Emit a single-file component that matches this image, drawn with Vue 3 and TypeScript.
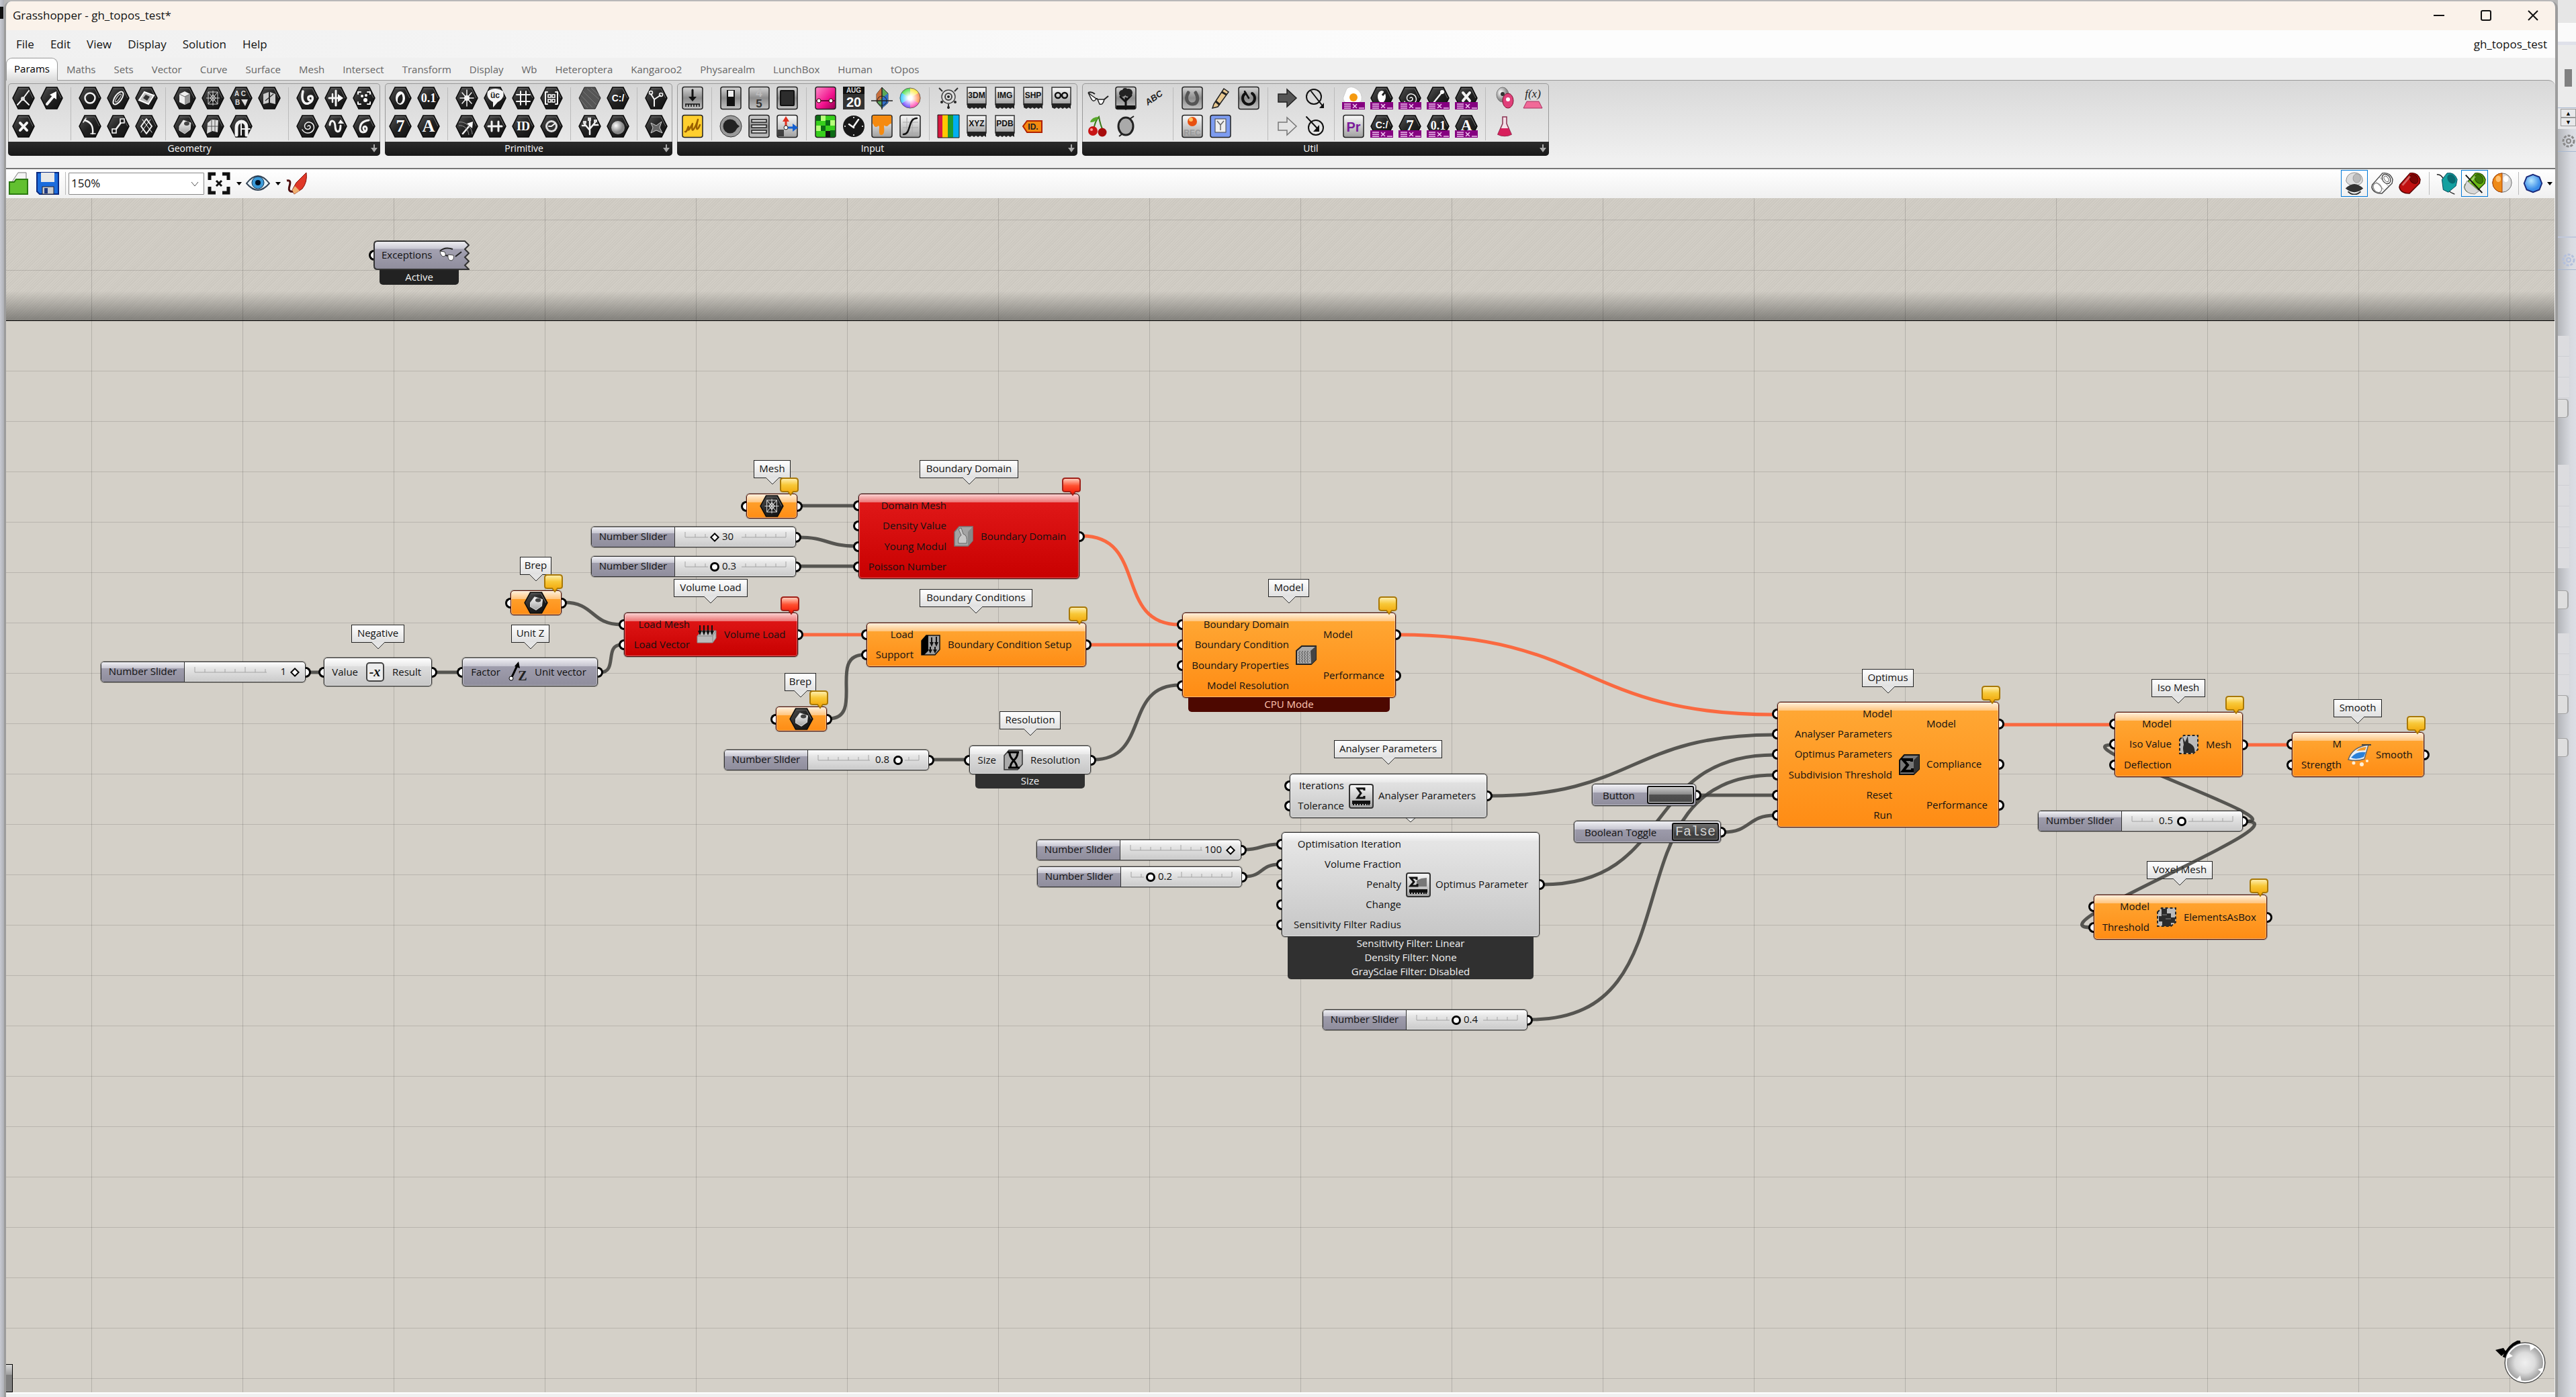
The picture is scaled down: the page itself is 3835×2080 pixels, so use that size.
<script setup lang="ts">
import { ref, reactive } from 'vue'

interface Tag { text: string; cx: number; y: number; w: number }
interface Node {
  kind: 'orange' | 'red' | 'grey' | 'slate'
  x: number; y: number; w: number; h: number
  ins: string[]; outs: string[]
  inW: number
  icon: string
  bubble?: 'warn' | 'error'
  footer?: string[]
}
interface Param { x: number; y: number; icon: string }
interface Slider { id: string; x: number; y: number; min: number; max: number; step: number; value: number; whole?: boolean }

/* Canvas pan: document coordinate shown at the canvas origin. */
const pan = { x: 9, y: 295 }
const at = (x: number, y: number) => ({ left: `${x - pan.x}px`, top: `${y - pan.y}px` })
const box = (n: { x: number; y: number; w: number; h: number }) => ({ ...at(n.x, n.y), width: `${n.w}px`, height: `${n.h}px` })

const menu = ['File', 'Edit', 'View', 'Display', 'Solution', 'Help']
const tabs = ['Params', 'Maths', 'Sets', 'Vector', 'Curve', 'Surface', 'Mesh', 'Intersect', 'Transform', 'Display', 'Wb', 'Heteroptera', 'Kangaroo2', 'Physarealm', 'LunchBox', 'Human', 'tOpos']
const zoom = ref('150%')

const w = 'stroke="#f4f4f4" stroke-width="2.5" fill="none" stroke-linecap="round" stroke-linejoin="round"'
const k = 'stroke="#111" stroke-width="2.5" fill="none" stroke-linecap="round" stroke-linejoin="round"'
/* Same strokes in other widths. */
const wl = (n: number) => `stroke="#f4f4f4" stroke-width="${n}" fill="none" stroke-linecap="round" stroke-linejoin="round"`
const kl = (n: number, c = '#111') => `stroke="${c}" stroke-width="${n}" fill="none" stroke-linecap="round" stroke-linejoin="round"`
const hex = (g: string) => `<path d="M10 2H26L34 18L26 34H10L2 18Z" fill="url(#gHex)" stroke="#0a0a0a" stroke-width="1.5"/><path d="M11 4H25L32 18" stroke="#6a6a6a" fill="none"/>${g}`
const tile = (g: string, f = 'url(#gTile)') => `<rect x="3" y="1.5" width="30" height="33" rx="3" fill="${f}" stroke="#222" stroke-width="1.5"/>${g}`
const glyph = (t: string, size = 24, fam = 'Liberation Serif', fill = '#fff', y = 26) =>
  `<text x="18" y="${y}" text-anchor="middle" font-family="${fam}" font-weight="700" font-size="${size}" fill="${fill}">${t}</text>`
const chip = (t: string) => `<path d="M4 2H32V28H4Z" fill="url(#gTile)" stroke="#333" stroke-width="1.5"/><path d="M4 26H32V34L29 32L26 34L23 32L20 34L17 32L14 34L11 32L8 34L4 32Z" fill="#222"/>${t && glyph(t, 12, 'Liberation Sans', '#111', 18)}`
const purple = (g: string) => `${g}<rect x="1" y="24" width="34" height="11" fill="#850080"/><path d="M4 27H14M4 30H14M4 33H14" stroke="#f0c8f0" stroke-width="1.5"/><path d="M17 27L23 33M23 27L17 33M26 33H34" stroke="#f0c8f0" stroke-width="1.5"/>`
const spiral = `<path d="M18 18c1-2 4-1 4 1c0 4-6 5-8 1c-2-5 3-9 7-8c6 1 8 8 5 12c-4 6-13 5-16-1" ${wl(1.5)}/>`

const g: Record<string, string> = {
  point: hex(`<path d="M17 19L26 7M17 19L9 28M17 19L26 28" ${wl(2)}/><circle cx="17" cy="19" r="3" fill="#ddd"/>`),
  vector: hex(`<path d="M11 27L21 15" ${wl(4)}/><path d="M25 8V20L15 13Z" fill="#fff"/>`),
  xhex: hex(`<path d="M13 13L23 24M23 13L13 24" ${wl(4)}/>`),
  circle: hex(`<circle cx="18" cy="18" r="7.5" ${w}/>`),
  arc: hex(`<path d="M10 9C20 12 23 18 22 29" ${w}/><path d="M19 29H26M8 12L12 6" ${wl(1.5)}/>`),
  ellipse: hex(`<ellipse cx="18" cy="18" rx="5" ry="11" transform="rotate(35 18 18)" ${wl(2)}/><ellipse cx="18" cy="18" rx="2" ry="7" transform="rotate(35 18 18)" ${wl(1)}/>`),
  line: hex(`<path d="M12 26L24 10" ${w}/><rect x="9" y="22" width="6" height="6" fill="#222" stroke="#fff" stroke-width="1.5"/><rect x="21" y="7" width="6" height="6" fill="#222" stroke="#fff" stroke-width="1.5"/>`),
  rect: hex(`<path d="M7 21L15 9L29 14L21 27Z" fill="#bbb" stroke="#fff" stroke-width="2"/><path d="M13 18L17 13L23 16L19 22Z" fill="#333"/>`),
  diamond: hex(`<path d="M18 7L26 18L18 29L10 18Z" ${wl(2)}/><path d="M12 8L26 27M24 8L10 27" ${wl(1)}/>`),
  cube: hex(`<path d="M10 12L18 8L26 12V24L18 28L10 24Z" fill="#eee"/><path d="M18 16V28L26 24V12Z" fill="#999"/><path d="M10 12L18 16L26 12" stroke="#666" fill="none"/>`),
  brep: hex(`<path d="M10 18L16 9L27 13L26 23L18 29L10 24Z" fill="url(#gTile)" stroke="#ddd"/><ellipse cx="21" cy="14" rx="4" ry="3" fill="#444"/>`),
  mesh: hex(`<path d="M11 9H25V27H11Z M11 9L25 27M25 9L11 27M18 7V29M8 18H28" stroke="#d0d0d0" fill="none"/><path d="M18 13L22 18L18 23L14 18Z" fill="none" stroke="#eee"/>`),
  surf: hex(`<path d="M10 13L16 8L26 9L25 27L17 25L9 29Z" fill="#ddd"/><path d="M16 8V25M21 9V26M10 18H26" stroke="#555"/>`),
  abc: hex(`<text x="8" y="15" font-family="Liberation Sans" font-size="10" font-weight="700" fill="#ddd">A C</text><text x="9" y="28" font-family="Liberation Sans" font-size="10" font-weight="700" fill="#ddd">B</text><path d="M18 20H28L24 30Z" fill="#ddd"/>`),
  arch: hex(`<path d="M11 31V20C11 8 26 8 26 20V31" ${wl(5)}/><path d="M18 14V31M18 22H31" ${wl(2)}/>`),
  book: hex(`<path d="M9 12L17 9V25L9 27ZM27 12L19 9V25L27 27Z" fill="#ccc"/><path d="M12 22L24 12" stroke="#333" stroke-width="1.5"/>`),
  hook: hex(`<path d="M11 8C8 20 12 28 19 26C28 22 26 14 22 15C17 16 19 21 21 21" ${wl(3.5)}/>`),
  spiral: hex(spiral),
  flow: hex(`<path d="M18 7V29M8 18H22" ${wl(3)}/><path d="M21 12L29 18L21 24Z" fill="#fff"/><path d="M13 12V24" ${w}/>`),
  wave: hex(`<path d="M9 16C10 8 16 8 17 17C17 29 25 29 25 17" ${wl(3)}/><path d="M21 14H30L25 8Z" fill="#fff"/>`),
  dots: hex(`<path d="M9 12V9H13M23 9H27V12M27 24V27H23M13 27H9V24" ${wl(2)}/><circle cx="15" cy="15" r="2" fill="#fff"/><circle cx="21" cy="14" r="2" fill="#fff"/><circle cx="20" cy="21" r="3" fill="#fff"/>`),
  twist: hex(`<path d="M25 9C15 10 12 16 12 22C13 29 21 28 22 22C22 16 14 18 18 24" ${wl(3)}/>`),
  bool: hex(`<ellipse cx="18" cy="18" rx="7" ry="10" fill="#fff"/><path d="M20 12A4 7 0 0 1 14 24Q13 15 20 12Z" fill="#222"/>`),
  seven: hex(glyph('7', 26)),
  num: hex(glyph('0.1', 18, 'Liberation Serif', '#fff', 24)),
  letter: hex(glyph('A', 26)),
  burst: hex(`<circle cx="18" cy="18" r="4" fill="#fff"/><path d="M18 6V30M8 18H28M11 10L25 26M25 10L11 26" ${wl(1.5)}/>`),
  ray: hex(`<path d="M12 29L23 16" ${w}/><path d="M27 11L26 21L18 14Z" fill="#fff"/><path d="M6 12C16 10 26 20 26 30M6 17C14 16 20 22 21 31" stroke="#999" fill="none"/>`),
  talk: hex(`<path d="M7 8Q18 0 30 8Q33 18 22 24L15 32L15 24Q4 18 7 8Z" fill="#f4f4f4"/>${glyph('üc', 12, 'Liberation Sans', '#222', 18)}`),
  link: hex(`<path d="M13 11V25M23 11V25M8 18H28" ${wl(3)}/>`),
  grid: hex(`<path d="M14 8V28M22 8V28M8 13H28M8 23H28" ${wl(2)}/>`),
  id: hex(glyph('ID', 18, 'Liberation Serif', '#fff', 24)),
  matrix: hex(`<path d="M12 9H9V27H12M24 9H27V27H24" ${wl(2)}/><path d="M13 13H17V17H13ZM19 13H23V17H19ZM13 20H17V24H13ZM19 20H23V24H19Z" stroke="#fff" stroke-width="1.5" fill="none"/>`),
  clockh: hex(`<circle cx="18" cy="18" r="9" fill="#ddd"/><circle cx="18" cy="18" r="6" fill="#333"/><path d="M18 18L23 14M18 18H14" ${wl(2)}/>`),
  shade: `<path d="M10 2H26L34 18L26 34H10L2 18Z" fill="#555" stroke="#222"/><path d="M8 8L28 28M5 14L22 32M14 4L32 20M20 3L33 15M4 20L15 33" stroke="#777"/>`,
  tree: hex(`<path d="M18 30V17M18 24L9 13M18 22L27 11M18 18V7M12 17H7M24 16H30" ${w}/><path d="M8 10H13V14H8ZM15 5H20V10H15ZM24 8H29V12H24Z" fill="#ddd"/>`),
  path: hex(glyph('C:/', 14, 'Liberation Sans', '#fff', 23)),
  ball: hex(`<circle cx="18" cy="20" r="10" fill="url(#gBall)"/>`),
  branch: hex(`<path d="M15 30V20L10 12M15 20L24 14" ${wl(2)}/><circle cx="10" cy="10" r="2.5" ${wl(1.5)}/><circle cx="25" cy="13" r="2.5" ${wl(1.5)}/>`),
  star: hex(`<path d="M10 13L18 17L26 11L23 20L27 28L18 24L10 28L13 20Z" fill="#666" stroke="#ccc"/>`),
  press: tile(`<path d="M18 6V18" ${kl(3)}/><path d="M12 16H24L18 23Z" fill="#111"/><path d="M7 27H29M8 27V31M12 27V31M16 27V31M20 27V31M24 27V31M28 27V31" stroke="#111" stroke-width="1.5"/>`, 'url(#gDim)'),
  scribble: tile(`<path d="M7 26C10 28 12 14 12 20C10 30 17 16 18 14C15 34 23 18 26 8C22 24 25 26 29 16" ${kl(2.5, '#9a6000')}/>`, '#ffcf2e'),
  toggle: tile(`<rect x="12" y="6" width="12" height="24" fill="#111"/><rect x="14" y="7" width="8" height="9" fill="#eee"/>`, 'url(#gDim)'),
  knob: `<circle cx="18" cy="18" r="16" fill="#999" stroke="#333"/><circle cx="17" cy="18" r="10.5" fill="#222"/><path d="M25 13L31 18L25 23Z" fill="#222"/>`,
  digits: tile(`${glyph('4', 17, 'Liberation Sans', '#bbb', 16)}${glyph('5', 17, 'Liberation Sans', '#333', 32)}`, 'url(#gDim)'),
  list: tile(`<path d="M7 8H29V12H7ZM7 16H29V20H7ZM7 24H29V28H7Z" fill="#ddd" stroke="#222" stroke-width="1.5"/>`, 'url(#gDim)'),
  panel: tile(`<rect x="8" y="7" width="20" height="22" rx="1" fill="#2c2c2c" stroke="#111" stroke-width="2"/>`, 'url(#gDim)'),
  axes: tile(`<path d="M16 20V8" stroke="#e03020" stroke-width="3"/><path d="M11 11L16 3L21 11Z" fill="#e03020"/><path d="M16 20H27" stroke="#1560d0" stroke-width="3"/><path d="M26 14L34 20L26 26Z" fill="#1560d0"/><circle cx="16" cy="20" r="3" fill="#fff" stroke="#222"/><path d="M4 23H13V33H4Z" fill="#111" opacity=".7"/>`),
  gradient: tile(`<path d="M4 22H32" stroke="#400020" stroke-width="1.5"/><circle cx="8" cy="22" r="3" fill="#fff" stroke="#300"/><circle cx="26" cy="22" r="3" fill="#fff" stroke="#300"/>`, 'url(#gPink)'),
  greens: tile(`<path d="M4 2H11V10H4ZM18 9H25V17H18ZM11 17H18V25H11ZM25 24H32V34H25Z" fill="#0b6b14"/><path d="M11 2H18V10H11ZM4 17H11V25H4ZM25 9H32V17H25Z" fill="#b6ff7a"/><path d="M18 25H25V34H18Z" fill="#111"/>`, '#37cf1c'),
  date: `<rect x="2" y="1" width="32" height="34" fill="#333"/><rect x="2" y="1" width="32" height="11" fill="#111"/>${glyph('AUG', 10, 'Liberation Sans', '#ddd', 10)}${glyph('20', 20, 'Liberation Sans', '#fff', 31)}`,
  clock: `<circle cx="18" cy="18" r="16" fill="#181818"/><path d="M18 4V6M18 30V32M4 18H6M30 18H32" stroke="#ccc" stroke-width="2"/><path d="M18 18L25 8M18 20L11 15" ${w}/>`,
  rgb: `<path d="M18 2L27 11V25L18 33L10 24V12Z" fill="#5aa85a" stroke="#333"/><path d="M18 2L10 12V24L18 18Z" fill="#c86e3c"/><path d="M18 18L27 11V25L18 33Z" fill="#2f6fc8"/><path d="M2 22H34M18 2V35" stroke="#222" stroke-width="1.5"/><circle cx="18" cy="22" r="7" fill="none" stroke="#222"/>`,
  drip: tile(`<path d="M4 2H32V14C28 14 28 18 25 18C22 18 22 15 21 18C22 26 21 31 17 31C13 31 14 24 14 19C13 15 12 19 9 19C6 19 6 15 4 14Z" fill="#f58a10"/>`),
  wheel: `<path d="M18 18L18 3A15 15 0 0 1 31 10Z" fill="#ffe83c"/><path d="M18 18L31 10A15 15 0 0 1 31 26Z" fill="#ff8a50"/><path d="M18 18L31 26A15 15 0 0 1 18 33Z" fill="#ff48b0"/><path d="M18 18L18 33A15 15 0 0 1 5 26Z" fill="#7048ff"/><path d="M18 18L5 26A15 15 0 0 1 5 10Z" fill="#2fc8ff"/><path d="M18 18L5 10A15 15 0 0 1 18 3Z" fill="#48e048"/><circle cx="18" cy="18" r="15" fill="url(#gGlow)" stroke="#666"/>`,
  curve: tile(`<path d="M7 12H30M7 20H30M7 28H30M13 5V31M21 5V31" stroke="#aaa"/><path d="M8 30C20 30 14 6 28 6" ${k}/>`),
  target: `<circle cx="18" cy="16" r="10" fill="#ddd" stroke="#444" stroke-width="1.5"/><circle cx="18" cy="16" r="5" fill="none" stroke="#444" stroke-width="2"/><circle cx="18" cy="16" r="2" fill="#222"/><path d="M4 3L9 8M32 3L27 8M18 27V34" stroke="#333" stroke-width="2"/><circle cx="8" cy="24" r="2" fill="#222"/><circle cx="28" cy="24" r="2" fill="#222"/><circle cx="18" cy="32" r="2" fill="#222"/>`,
  bars: `<path d="M2 1H9V35H2Z" fill="#d81840"/><path d="M9 1H17V35H9Z" fill="#ffc800"/><path d="M17 1H25V35H17Z" fill="#1e9b30"/><path d="M25 1H34V35H25Z" fill="#00aef0"/><path d="M2 1H34V35H2Z" fill="none" stroke="#111"/>`,
  m3d: chip('3DM'), img: chip('IMG'), shp: chip('SHP'), xyz: chip('XYZ'), pdb: chip('PDB'),
  eyes: chip('') + `<circle cx="13" cy="14" r="4" ${k}/><circle cx="23" cy="14" r="4" ${k}/>`,
  idtag: `<path d="M3 18L9 10H31V27H9Z" fill="#f58a10" stroke="#b02000" stroke-width="2"/>${glyph('ID.', 12, 'Liberation Sans', '#222', 23)}`,
  specs: `<path d="M4 10L8 18Q12 26 16 19L9 14Z" fill="#fff" stroke="#222" stroke-width="1.5"/><path d="M18 20L28 20Q26 29 21 27Z" fill="#fff" stroke="#222" stroke-width="1.5"/><path d="M4 10Q9 8 14 12M28 20L34 15M16 19H18" stroke="#222" stroke-width="2" fill="none"/>`,
  cherry: `<path d="M12 24Q14 10 20 4Q22 16 26 24" stroke="#3b7a1a" stroke-width="2" fill="none"/><path d="M20 4Q9 4 7 12Q15 13 20 4Z" fill="#58a82a"/><circle cx="11" cy="25" r="7" fill="#c81414"/><circle cx="25" cy="27" r="6.5" fill="#a80c0c"/><circle cx="9" cy="23" r="2" fill="#ff9a9a"/>`,
  oak: tile(`<path d="M18 34V18M18 24L10 16M18 22L26 14" ${kl(3)}/><circle cx="13" cy="11" r="5" fill="#222"/><circle cx="22" cy="10" r="6" fill="#222"/><circle cx="17" cy="7" r="4" fill="#222"/><path d="M4 29H32V34H4Z" fill="#111"/>`, 'url(#gDim)'),
  lens: `<ellipse cx="18" cy="18" rx="11" ry="13" fill="#aaa" stroke="#222" stroke-width="3"/><path d="M24 7L30 3M12 30L8 33" stroke="#222" stroke-width="2"/>`,
  text: `<text x="18" y="22" text-anchor="middle" transform="rotate(-35 18 18)" font-family="Liberation Sans" font-style="italic" font-size="13" font-weight="700" fill="#222">ABC</text>`,
  loop: tile(`<path d="M12 10C6 20 12 27 18 27C26 27 28 18 23 10" ${kl(5, '#555')}/>`, 'url(#gDim)'),
  rec: `${tile('')}<circle cx="18" cy="11" r="7" fill="#e85010"/><circle cx="16" cy="8" r="3" fill="#ffc060"/>${glyph('REC', 12, 'Liberation Sans', '#999', 32)}`,
  pencil: `<path d="M8 27L23 4L30 9L14 31L6 33Z" fill="#e8c890" stroke="#222" stroke-width="1.5"/><path d="M20 9L27 13M11 23L17 28" stroke="#222" stroke-width="3"/>`,
  blue: tile(`<rect x="10" y="7" width="16" height="20" fill="#eee" stroke="#444"/><path d="M13 10L18 16L23 10M18 16V24" stroke="#666" fill="none" stroke-width="1.5"/>`, '#7d9cf0'),
  power: tile(`<path d="M13 11A9 9 0 1 0 23 11" ${kl(4)}/><path d="M18 18L12 8" ${k}/>`, 'url(#gDim)'),
  arrow: `<path d="M5 12H18V5L32 18L18 31V24H5Z" fill="#555" stroke="#222" stroke-width="1.5"/>`,
  arrowl: `<path d="M5 12H18V5L32 18L18 31V24H5Z" fill="#e4e4e4" stroke="#777" stroke-width="1.5"/>`,
  qout: `<circle cx="16" cy="16" r="11" ${kl(2)}/><path d="M12 8L30 31" ${kl(2)}/><path d="M31 25V33H24Z" fill="#111"/>`,
  qin: `<circle cx="19" cy="20" r="11" ${kl(2)}/><path d="M5 4L21 21" ${kl(2)}/><path d="M24 16V26H15Z" fill="#111"/>`,
  egg: purple(`<path d="M8 4Q14 -1 22 4Q32 10 30 22Q24 28 8 26Q0 22 4 14Z" fill="#fff" stroke="#ccc"/><circle cx="18" cy="17" r="6" fill="#f59a10"/>`),
  pr: tile(`${glyph('Pr', 20, 'Liberation Sans', '#7a1a9a', 26)}`),
  pbool: purple(hex(`<ellipse cx="18" cy="16" rx="6" ry="9" fill="#fff"/><path d="M19 14L24 8" stroke="#222" stroke-width="3"/>`)),
  pspiral: purple(hex(spiral)),
  pline: purple(hex(`<path d="M12 24L24 9" ${w}/><circle cx="24" cy="9" r="3" fill="#fff"/>`)),
  px: purple(hex(`<path d="M13 10L23 22M23 10L13 22" ${wl(4)}/>`)),
  ppath: purple(hex(glyph('C:/', 14, 'Liberation Sans', '#fff', 21))),
  pseven: purple(hex(glyph('7', 23, 'Liberation Serif', '#fff', 24))),
  pnum: purple(hex(glyph('0.1', 18, 'Liberation Serif', '#fff', 23))),
  pletter: purple(hex(glyph('A', 23, 'Liberation Serif', '#fff', 24))),
  pills: `<ellipse cx="15" cy="13" rx="9" ry="11" fill="url(#gBall)" stroke="#777"/><ellipse cx="23" cy="22" rx="8" ry="11" fill="#e0407a" stroke="#801030"/><circle cx="23" cy="20" r="3" fill="#fff"/><circle cx="15" cy="12" r="3" fill="#333"/>`,
  flask: `<path d="M15 4H21V14L28 30Q18 35 8 30L15 14Z" fill="#f4e0e8" stroke="#8a3050" stroke-width="1.5"/><path d="M12 21H24L28 30Q18 35 8 30Z" fill="#d8205c"/>`,
  fx: `<text x="18" y="17" text-anchor="middle" font-family="Liberation Serif" font-style="italic" font-size="17" fill="#222">f(x)</text><path d="M9 23H27L32 33H4Z" fill="#f06a98" stroke="#a83060"/>`,
}

interface Group { top: string[]; bottom: string[] }
const ribbon: { name: string; groups: Group[] }[] = [
  { name: 'Geometry', groups: [
    { top: ['point', 'vector'], bottom: ['xhex', ''] },
    { top: ['circle', 'ellipse', 'rect'], bottom: ['arc', 'line', 'diamond'] },
    { top: ['cube', 'mesh', 'abc', 'book'], bottom: ['brep', 'surf', 'arch', ''] },
    { top: ['hook', 'flow', 'dots'], bottom: ['spiral', 'wave', 'twist'] } ] },
  { name: 'Primitive', groups: [
    { top: ['bool', 'num'], bottom: ['seven', 'letter'] },
    { top: ['burst', 'talk', 'grid', 'matrix'], bottom: ['ray', 'link', 'id', 'clockh'] },
    { top: ['shade', 'path'], bottom: ['tree', 'ball'] },
    { top: ['branch'], bottom: ['star'] } ] },
  { name: 'Input', groups: [
    { top: ['press'], bottom: ['scribble'] },
    { top: ['toggle', 'digits', 'panel'], bottom: ['knob', 'list', 'axes'] },
    { top: ['gradient', 'date', 'rgb', 'wheel'], bottom: ['greens', 'clock', 'drip', 'curve'] },
    { top: ['target', 'm3d', 'img', 'shp', 'eyes'], bottom: ['bars', 'xyz', 'pdb', 'idtag', ''] } ] },
  { name: 'Util', groups: [
    { top: ['specs', 'oak', 'text'], bottom: ['cherry', 'lens', ''] },
    { top: ['loop', 'pencil', 'power'], bottom: ['rec', 'blue', ''] },
    { top: ['arrow', 'qout'], bottom: ['arrowl', 'qin'] },
    { top: ['egg', 'pbool', 'pspiral', 'pline', 'px'], bottom: ['pr', 'ppath', 'pseven', 'pnum', 'pletter'] },
    { top: ['pills', 'fx'], bottom: ['flask', ''] } ] },
]

const tube = (a: string, b: string, s: string) => `<path d="M3 20L19 2Q31 0 35 12L34 18L18 34Q4 34 2 24Z" fill="${a}" stroke="${s}" stroke-width="1.5"/><ellipse cx="25" cy="11" rx="6" ry="8" transform="rotate(-35 25 11)" fill="${b}" stroke="${s}"/><path d="M7 21L19 7" stroke="#fff" stroke-opacity=".35" stroke-width="3"/>`
const preview: { icon: string; on?: boolean; sep?: string; label: string }[] = [
  { label: 'No preview', on: true, icon: `<path d="M5 14Q6 2 18 1Q31 2 31 14Q30 20 18 22Q6 20 5 14Z" fill="#ddd" stroke="#888"/><ellipse cx="22" cy="10" rx="6" ry="7" fill="#bbb" stroke="#999"/><path d="M4 26Q18 12 32 26Q18 38 4 26Z" fill="#333"/><path d="M8 31Q18 40 28 31" stroke="#333" stroke-width="2" fill="none"/>` },
  { label: 'Wireframe preview', icon: `<path d="M3 20L19 2Q31 0 35 12L34 18L18 34Q4 34 2 24Z" fill="#fff" stroke="#444" stroke-width="1.5"/><ellipse cx="25" cy="11" rx="6" ry="8" transform="rotate(-35 25 11)" fill="none" stroke="#444" stroke-width="1.5"/><ellipse cx="25" cy="11" rx="3" ry="5" transform="rotate(-35 25 11)" fill="none" stroke="#666"/><ellipse cx="11" cy="25" rx="6" ry="8" transform="rotate(-35 11 25)" fill="none" stroke="#888" stroke-width="1.5"/><path d="M8 15L21 28M14 8L28 22" stroke="#888"/>` },
  { label: 'Shaded preview', icon: tube('#c01010', '#7a0606', '#500'), sep: 'wide' },
  { label: 'Selected only', icon: `<path d="M2 4Q12 4 14 18Q16 30 30 35" stroke="#222" stroke-width="1.5" fill="none"/><path d="M10 12L18 2Q30 0 34 12L32 22L20 32L12 28Z" fill="#14a0a0" stroke="#045"/><ellipse cx="25" cy="11" rx="6" ry="8" transform="rotate(-35 25 11)" fill="#0a6a70"/>` },
  { label: 'Clipped preview', on: true, icon: `${tube('#6ab814', '#3c7a08', '#264d04')}<path d="M6 14L25 30L18 35Q4 34 2 24Z" fill="#d8d8d8" stroke="#888"/><path d="M4 5L30 33" stroke="#111" stroke-width="2"/>` },
  { label: 'Document colours', icon: `<circle cx="18" cy="17" r="15" fill="#ddd" stroke="#666"/><path d="M18 2A15 15 0 0 0 18 32Z" fill="#ee8a18" stroke="#a03a00"/><ellipse cx="12" cy="11" rx="4" ry="5" fill="#ffc070"/><ellipse cx="24" cy="11" rx="4" ry="5" fill="#fff"/>`, sep: 'tight' },
  { label: 'Mesh quality', icon: `<path d="M18 4L28 8L32 18L28 28L18 32L8 28L4 18L8 8Z" fill="url(#gBlue)" stroke="#1a2a7a" stroke-width="2"/>` },
]

const slab = '<path d="M2 9L9 1H29V22L22 30H2Z" fill="#aaa" stroke="#333" stroke-width="1.5"/>'
const comb = '<path d="M3 23H28V26H3ZM4 26V29M8 26V29M12 26V29M16 26V29M20 26V29M24 26V29M27 26V29" fill="#111" stroke="#111" stroke-width="2"/>'
const nodeIcons: Record<string, string> = {
  domain: `<path d="M2 9L9 1H29V22L22 30H2Z" fill="#a4a4a4" stroke="#777" stroke-width="1.5"/><path d="M22 9V30L29 22V1Z" fill="#888"/><path d="M12 3L15 12Q22 14 20 26H8Q6 18 12 14L8 5Z" fill="#c8c8c8" stroke="#666"/>`,
  load: `<path d="M1 17L8 9H29V20L24 27H1Z" fill="#bbb" stroke="#888"/><path d="M1 17H24L29 9M24 17V27" stroke="#888" fill="none"/><path d="M5 1V14M11 1V14M17 1V14M23 1V14" stroke="#111" stroke-width="2"/><path d="M2 9H8L5 16ZM8 9H14L11 16ZM14 9H20L17 16ZM20 9H26L23 16Z" fill="#111"/>`,
  bc: `<path d="M2 9L9 1H29V22L22 30H2Z" fill="#a0a0a0" stroke="#111" stroke-width="1.5"/><path d="M2 9L9 1H12V24L6 30H2Z" fill="#000"/><path d="M17 4V14M24 3V14M15 18V24M22 18V24" stroke="#111" stroke-width="2"/><path d="M14 11H20L17 18ZM21 11H27L24 18ZM12 22H18L15 28ZM19 22H25L22 28Z" fill="#111"/>`,
  res: `${slab}<path d="M7 4H24M8 27H25M10 5C10 16 21 16 21 27M22 5C22 16 11 16 11 27" stroke="#000" stroke-width="3" fill="none"/>`,
  neg: `<rect x="3" y="2" width="25" height="27" rx="4" fill="#ececec" stroke="#444" stroke-width="2"/><text x="15" y="22" text-anchor="middle" font-family="Liberation Serif" font-style="italic" font-weight="700" font-size="20" fill="#111">-x</text>`,
  unitz: `<path d="M6 25L15 6" stroke="#000" stroke-width="3"/><path d="M11 7L17 0L19 10Z" fill="#000"/><circle cx="6" cy="25" r="3" fill="#fff" stroke="#000"/><text x="23" y="28" text-anchor="middle" font-family="Liberation Serif" font-weight="700" font-size="20" fill="#222">Z</text>`,
  model: `<path d="M1 9L9 2H30V22L23 29H1Z" fill="#aaa" stroke="#222" stroke-width="2"/><path d="M4 12H21M4 16H21M4 20H21M4 24H21M6 9V28M10 9V28M14 9V28M18 9V28" stroke="#666" stroke-width="1.5" stroke-dasharray="2 2"/><path d="M22 9L30 2V22L23 29Z" fill="#444"/>`,
  analyser: `<rect x="-2" y="-2" width="35" height="35" rx="3" fill="url(#gTile)" stroke="#333" stroke-width="2"/><path d="M20 7V4H10L15 11L10 18H20V15" stroke="#111" stroke-width="3" fill="none"/>${comb}`,
  optparam: `<rect x="-2" y="-2" width="35" height="35" rx="3" fill="url(#gTile)" stroke="#333" stroke-width="2"/><path d="M13 16V9L20 6L28 5V18H13Z" fill="#777"/><path d="M13 8V5H4L9 11L4 17H14V14" stroke="#111" stroke-width="3" fill="none"/>${comb}`,
  optimus: `<path d="M1 9L8 1H30V22L22 30H1Z" fill="#777" stroke="#111" stroke-width="2"/><path d="M22 9L30 1V22L22 30Z" fill="#333"/><path d="M19 11V8H6L13 16L6 25H20V21" stroke="#000" stroke-width="4" fill="none"/>`,
  iso: `<path d="M2 8L8 2H29V23L22 29H2Z" fill="#bbb" stroke="#222" stroke-width="2" stroke-dasharray="4 3"/><path d="M6 3L10 12L14 3L15 13Q26 17 24 28H8Q6 20 8 16Z" fill="#2c2c2c"/>`,
  voxel: `<path d="M2 8L8 2H29V23L22 29H2Z" fill="#bbb" stroke="#222" stroke-width="2" stroke-dasharray="4 3"/><path d="M8 3H16V10H22V16H28V24H22V29H9V22H4V14H8Z" fill="#2c2c2c"/><path d="M9 12H16M14 18H22" stroke="#888"/>`,
  smooth: `<path d="M0 23Q6 4 30 1L24 22Q12 26 0 23Z" fill="#e8f0f8" stroke="#666" stroke-width="1.5"/><path d="M4 20Q12 10 26 12L23 19Q12 24 4 20Z" fill="#2a80d8"/><path d="M12 10Q18 4 27 4L25 9Z" fill="#f59a28"/><path d="M20 1H34" stroke="#444" stroke-width="2"/><circle cx="8" cy="28" r="2.5" fill="#fff0d8"/><circle cx="20" cy="30" r="3" fill="#fff0d8"/><circle cx="28" cy="25" r="2" fill="#fff0d8"/>`,
}

const tags: Tag[] = [
  { text: 'Mesh', cx: 1149, y: 685, w: 55 }, { text: 'Boundary Domain', cx: 1442, y: 685, w: 147 },
  { text: 'Volume Load', cx: 1058, y: 862, w: 110 }, { text: 'Boundary Conditions', cx: 1453, y: 877, w: 168 },
  { text: 'Brep', cx: 797, y: 829, w: 47 }, { text: 'Brep', cx: 1191, y: 1002, w: 47 },
  { text: 'Resolution', cx: 1533, y: 1059, w: 91 }, { text: 'Negative', cx: 562, y: 930, w: 79 },
  { text: 'Unit Z', cx: 789, y: 930, w: 57 }, { text: 'Model', cx: 1918, y: 862, w: 61 },
  { text: 'Analyser Parameters', cx: 2066, y: 1102, w: 161 }, { text: 'Optimus', cx: 2810, y: 996, w: 77 },
  { text: 'Iso Mesh', cx: 3243, y: 1011, w: 80 }, { text: 'Smooth', cx: 3510, y: 1041, w: 72 },
  { text: 'Voxel Mesh', cx: 3245, y: 1282, w: 98 },
]

const nodes: Node[] = [
  { kind: 'red', x: 1278, y: 735, w: 329, h: 127, ins: ['Domain Mesh', 'Density Value', 'Young Modul', 'Poisson Number'], outs: ['Boundary Domain'], inW: 130, icon: 'domain', bubble: 'error' },
  { kind: 'red', x: 929, y: 912, w: 259, h: 66, ins: ['Load Mesh', 'Load Vector'], outs: ['Volume Load'], inW: 97, icon: 'load', bubble: 'error' },
  { kind: 'orange', x: 1290, y: 927, w: 327, h: 66, ins: ['Load', 'Support'], outs: ['Boundary Condition Setup'], inW: 69, icon: 'bc', bubble: 'warn' },
  { kind: 'grey', x: 1443, y: 1110, w: 181, h: 43, ins: ['Size'], outs: ['Resolution'], inW: 39, icon: 'res', footer: ['Size'] },
  { kind: 'grey', x: 482, y: 979, w: 161, h: 43, ins: ['Value'], outs: ['Result'], inW: 50, icon: 'neg' },
  { kind: 'slate', x: 688, y: 979, w: 202, h: 43, ins: ['Factor'], outs: ['Unit vector'], inW: 56, icon: 'unitz' },
  { kind: 'orange', x: 1760, y: 912, w: 318, h: 127, ins: ['Boundary Domain', 'Boundary Condition', 'Boundary Properties', 'Model Resolution'], outs: ['Model', 'Performance'], inW: 158, icon: 'model', bubble: 'warn', footer: ['CPU Mode'] },
  { kind: 'grey', x: 1920, y: 1152, w: 294, h: 66, ins: ['Iterations', 'Tolerance'], outs: ['Analyser Parameters'], inW: 80, icon: 'analyser' },
  { kind: 'grey', x: 1908, y: 1239, w: 384, h: 156, ins: ['Optimisation Iteration', 'Volume Fraction', 'Penalty', 'Change', 'Sensitivity Filter Radius'], outs: ['Optimus Parameter'], inW: 177, icon: 'optparam', footer: ['Sensitivity Filter: Linear', 'Density Filter: None', 'GraySclae Filter: Disabled'] },
  { kind: 'orange', x: 2646, y: 1045, w: 330, h: 187, ins: ['Model', 'Analyser Parameters', 'Optimus Parameters', 'Subdivision Threshold', 'Reset', 'Run'], outs: ['Model', 'Compliance', 'Performance'], inW: 170, icon: 'optimus', bubble: 'warn' },
  { kind: 'orange', x: 3148, y: 1060, w: 191, h: 97, ins: ['Model', 'Iso Value', 'Deflection'], outs: ['Mesh'], inW: 84, icon: 'iso', bubble: 'warn' },
  { kind: 'orange', x: 3412, y: 1090, w: 197, h: 67, ins: ['M', 'Strength'], outs: ['Smooth'], inW: 73, icon: 'smooth', bubble: 'warn' },
  { kind: 'orange', x: 3117, y: 1332, w: 258, h: 67, ins: ['Model', 'Threshold'], outs: ['ElementsAsBox'], inW: 82, icon: 'voxel', bubble: 'warn' },
]

const params: Param[] = [
  { x: 1111, y: 735, icon: 'mesh' },
  { x: 760, y: 879, icon: 'brep' },
  { x: 1155, y: 1052, icon: 'brep' },
]

const sliders = reactive<Slider[]>([
  { id: 'young', x: 880, y: 784, min: 0, max: 100, step: 1, value: 30, whole: true },
  { id: 'poisson', x: 880, y: 828, min: 0, max: 1, step: 0.1, value: 0.3 },
  { id: 'factor', x: 150, y: 985, min: 0, max: 1, step: 1, value: 1, whole: true },
  { id: 'size', x: 1078, y: 1116, min: 0, max: 1, step: 0.1, value: 0.8 },
  { id: 'iteration', x: 1543, y: 1250, min: 0, max: 100, step: 1, value: 100, whole: true },
  { id: 'fraction', x: 1544, y: 1290, min: 0, max: 1, step: 0.1, value: 0.2 },
  { id: 'threshold', x: 1969, y: 1503, min: 0, max: 1, step: 0.1, value: 0.4 },
  { id: 'isovalue', x: 3034, y: 1207, min: 0, max: 1, step: 0.1, value: 0.5 },
])
const track = 150
const thumb = (s: Slider) => ((s.value - s.min) / (s.max - s.min)) * track
const leftSide = (s: Slider) => thumb(s) >= track / 2
const gap = (s: Slider): [number, number] => leftSide(s) ? [thumb(s) - 42, thumb(s) + 10] : [thumb(s) - 10, thumb(s) + 40]
const ticks = (s: Slider) => {
  const [a, b] = gap(s)
  const marks = Array.from({ length: 11 }, (_, i) => i * 15).filter(x => x < a || x > b)
    .map(x => `M${x + 1} 9V${x % 75 === 0 ? 1 : 4}`).join('')
  const head = a > 0 ? `M1 9H${a}` : ''
  const tail = b < track ? `M${b} 9H${track + 1}` : ''
  return marks + head + tail
}
const valuePos = (s: Slider) => leftSide(s) ? { right: `${track + 28 - thumb(s)}px` } : { left: `${thumb(s) + 25}px` }

const wire = (x1: number, y1: number, x2: number, y2: number, d = Math.hypot(x2 - x1, y2 - y1) / 2) =>
  `M${x1} ${y1}C${x1 + d} ${y1} ${x2 - d} ${y2} ${x2} ${y2}`
const wires = [
  wire(1190, 753, 1274, 753), wire(1189, 800, 1274, 813), wire(1189, 843, 1274, 843),
  wire(458, 1001, 478, 1001), wire(647, 1001, 684, 1001), wire(840, 897, 925, 930),
  wire(894, 1001, 925, 960), wire(1234, 1070, 1286, 975), wire(1387, 1131, 1439, 1131),
  wire(1628, 1131, 1756, 1020), wire(1852, 1265, 1904, 1257), wire(1853, 1305, 1904, 1287),
  wire(2218, 1185, 2642, 1094), wire(2296, 1317, 2642, 1124), wire(2279, 1518, 2642, 1154),
  wire(2528, 1184, 2642, 1184), wire(2566, 1239, 2642, 1214),
  wire(3343, 1223, 3144, 1109, 75), wire(3343, 1223, 3113, 1381, 92),
]
const hotWires = [
  wire(1611, 798, 1756, 930), wire(1192, 945, 1286, 945), wire(1621, 960, 1756, 960),
  wire(2082, 945, 2642, 1064), wire(2980, 1079, 3144, 1079), wire(3343, 1109, 3408, 1109),
]
const toggle = ref(false)
</script>

<template>
  <div class="desktop">
    <svg class="defs" aria-hidden="true">
      <defs>
        <linearGradient id="gHex" x1="0" y1="0" x2="1" y2="1"><stop offset="0" stop-color="#555" /><stop offset=".5" stop-color="#222" /><stop offset="1" stop-color="#111" /></linearGradient>
        <linearGradient id="gTile" x1="0" y1="0" x2="0" y2="1"><stop offset="0" stop-color="#fafafa" /><stop offset="1" stop-color="#a0a0a0" /></linearGradient>
        <linearGradient id="gDim" x1="0" y1="0" x2="0" y2="1"><stop offset="0" stop-color="#d4d4d4" /><stop offset=".5" stop-color="#8c8c8c" /><stop offset="1" stop-color="#c4c4c4" /></linearGradient>
        <linearGradient id="gPink" x1="0" y1="0" x2="1" y2="1"><stop offset="0" stop-color="#ff8ac8" /><stop offset=".6" stop-color="#f0108c" /><stop offset="1" stop-color="#90004c" /></linearGradient>
        <radialGradient id="gGlow"><stop offset=".2" stop-color="#fff" /><stop offset="1" stop-color="#fff" stop-opacity="0" /></radialGradient>
        <radialGradient id="gBall" cx=".35" cy=".35"><stop offset="0" stop-color="#fff" /><stop offset="1" stop-color="#888" /></radialGradient>
        <radialGradient id="gBlue" cx=".4" cy=".35"><stop offset="0" stop-color="#b8e8ff" /><stop offset="1" stop-color="#3a8ce8" /></radialGradient>
        <radialGradient id="gDial"><stop offset="0" stop-color="#f0f0f0" /><stop offset=".5" stop-color="#dcdcdc" /><stop offset="1" stop-color="#909090" /></radialGradient>
        <linearGradient id="gWarn" x1="0" y1="0" x2="0" y2="1"><stop offset="0" stop-color="#fff2b8" /><stop offset=".4" stop-color="#f8c838" /><stop offset="1" stop-color="#f0a000" /></linearGradient>
        <linearGradient id="gError" x1="0" y1="0" x2="0" y2="1"><stop offset="0" stop-color="#ffd8c8" /><stop offset=".45" stop-color="#ff5030" /><stop offset="1" stop-color="#f01000" /></linearGradient>
        <linearGradient id="gEx" x1="0" y1="0" x2="0" y2="1"><stop offset="0" stop-color="#f2f2f5" /><stop offset=".27" stop-color="#c8c7d2" /><stop offset=".28" stop-color="#a3a1b1" /><stop offset="1" stop-color="#8f8d9c" /></linearGradient>
      </defs>
    </svg>

    <div class="edge left"><i class="mark"></i></div>

    <main class="window">
      <header class="title">
        <span>Grasshopper - gh_topos_test*</span>
        <div class="controls">
          <button aria-label="Minimize"><svg width="16" height="16"><path d="M0 8H16" /></svg></button>
          <button aria-label="Maximize"><svg width="16" height="16"><rect x="1" y="1" width="14" height="14" rx="2" /></svg></button>
          <button aria-label="Close"><svg width="16" height="16"><path d="M1 1L15 15M15 1L1 15" /></svg></button>
        </div>
      </header>

      <nav class="menu">
        <button v-for="m in menu" :key="m">{{ m }}</button>
        <span class="doc">gh_topos_test</span>
      </nav>

      <div class="tabs">
        <button v-for="(t, i) in tabs" :key="t" :class="{ active: i === 0 }">{{ t }}</button>
      </div>

      <section class="ribbon">
        <div v-for="p in ribbon" :key="p.name" class="panel">
          <div class="groups">
            <div v-for="(grp, i) in p.groups" :key="i" class="group">
              <div v-for="(row, r) in [grp.top, grp.bottom]" :key="r" class="row">
                <span v-for="(ic, c) in row" :key="c" class="cell">
                  <svg v-if="ic" width="36" height="36" viewBox="0 0 36 36" v-html="g[ic]"></svg>
                </span>
              </div>
            </div>
          </div>
          <div class="caption"><span>{{ p.name }}</span><svg width="10" height="12"><path d="M5 0V7M2 6L5 10L8 6Z" fill="#aaa" stroke="#aaa" stroke-width="2" /></svg></div>
        </div>
      </section>

      <section class="toolbar">
        <button class="tool" aria-label="Open"><svg width="36" height="36" viewBox="0 0 36 36"><path d="M8 14L16 2H28V20H8Z" fill="#f4f4f4" stroke="#777" /><path d="M3 34V16H10L13 12H30V34Z" fill="#62c030" stroke="#2b7a10" stroke-width="2" /></svg></button>
        <button class="tool" aria-label="Save"><svg width="36" height="36" viewBox="0 0 36 36"><path d="M2 2H34V34H6L2 30Z" fill="#1c6cdc" stroke="#0a2a80" stroke-width="2" /><rect x="8" y="2" width="20" height="14" fill="#e8e8e8" /><rect x="10" y="23" width="17" height="11" fill="#ccc" stroke="#223" /><rect x="13" y="25" width="5" height="8" fill="#223a80" /></svg></button>
        <i class="sep"></i>
        <label class="zoom">
          <select v-model="zoom" aria-label="Zoom"><option>50%</option><option>100%</option><option>150%</option></select>
          <svg width="12" height="8"><path d="M1 1L6 7L11 1" fill="none" stroke="#555" /></svg>
        </label>
        <button class="tool" aria-label="Zoom extents"><svg width="36" height="36" viewBox="0 0 36 36"><path d="M4 13V4H13M23 4H32V13M32 23V32H23M13 32H4V23" fill="none" stroke="#111" stroke-width="5" /><path d="M14 14L22 22M22 14L14 22" stroke="#111" stroke-width="3" /></svg></button>
        <i class="caret"></i>
        <button class="tool" aria-label="Named views"><svg width="36" height="36" viewBox="0 0 36 36"><path d="M1 18Q18 -4 35 18Q18 38 1 18Z" fill="#e8f4fa" stroke="#345" stroke-width="2" /><circle cx="18" cy="17" r="9" fill="#3a9ad8" stroke="#135" /><circle cx="18" cy="17" r="4" fill="#012" /></svg></button>
        <i class="caret"></i>
        <button class="tool" aria-label="Sketch"><svg width="36" height="36" viewBox="0 0 36 36"><path d="M3 14Q10 12 7 22Q4 32 14 30" stroke="#501010" stroke-width="3" fill="none" /><path d="M32 2Q34 16 26 26L14 34L11 28L17 17Z" fill="#e03828" stroke="#801008" /><path d="M15 22L22 29L14 34L11 28Z" fill="#f0b070" /></svg></button>
        <span class="fill"></span>
        <template v-for="p in preview" :key="p.label">
          <button class="tool mode" :class="{ on: p.on }" :aria-label="p.label"><svg width="34" height="34" viewBox="0 0 36 36" v-html="p.icon"></svg></button>
          <i v-if="p.sep" class="sep" :class="p.sep"></i>
        </template>
        <i class="caret end"></i>
      </section>

      <section class="canvas">
        <div class="offpage"></div>
        <div class="grid"></div>

        <div v-for="(t, i) in tags" :key="i" class="tag" :style="{ ...at(t.cx - Math.floor(t.w / 2), t.y), width: t.w + 'px' }">
          {{ t.text }}
          <svg width="20" height="11"><path d="M0 0L10 10L20 0" fill="#e4e4e4" stroke="#333" /></svg>
        </div>

        <svg class="wires" width="100%" height="100%" aria-hidden="true">
          <g :transform="`translate(${-pan.x} ${-pan.y})`">
            <path d="M2090 1215L2100 1224L2110 1215" fill="#eee" stroke="#333" />
            <path v-for="(d, i) in wires" :key="'w' + i" :d="d" class="cold" />
            <path v-for="(d, i) in hotWires" :key="'h' + i" :d="d" class="hot" />
          </g>
        </svg>

        <div class="exceptions" :style="at(556, 358)">
          <i class="port in"></i>
          <svg class="jag" width="143" height="44">
            <path d="M6 1H136L142 7L136 13L142 19L136 25L142 31L136 37L142 43H6Q1 43 1 38V6Q1 1 6 1Z" fill="url(#gEx)" stroke="#333" stroke-width="2" /></svg>
          <span>Exceptions</span>
          <svg class="glasses" width="34" height="22" viewBox="0 0 34 22"><path d="M1 6Q8 -1 20 3M24 14L33 7M9 12L13 13" stroke="#222" stroke-width="2" fill="none" /><path d="M1 6Q2 14 7 14Q11 12 8 7Z" fill="#fff" stroke="#444" /><path d="M13 11Q12 20 18 20Q23 18 21 12Z" fill="#fff" stroke="#444" /></svg>
          <div class="foot">Active</div>
        </div>

        <div v-for="(n, i) in nodes" :key="'n' + i" class="node" :class="n.kind" :style="box(n)">
          <div class="ins" :style="{ width: n.inW + 'px' }">
            <span v-for="s in n.ins" :key="s"><i class="port in"></i>{{ s }}</span>
          </div>
          <svg class="glyph" width="31" height="31" viewBox="0 0 31 31" v-html="nodeIcons[n.icon]"></svg>
          <div class="outs">
            <span v-for="s in n.outs" :key="s">{{ s }}<i class="port out"></i></span>
          </div>
          <div v-if="n.footer" class="foot"><div v-for="f in n.footer" :key="f">{{ f }}</div></div>
          <svg v-if="n.bubble" class="bubble" width="28" height="28"><path d="M5 1H23Q27 1 27 5V18Q27 21 23 21H20L16 26L12 21H5Q1 21 1 18V5Q1 1 5 1Z" :fill="n.bubble === 'warn' ? 'url(#gWarn)' : 'url(#gError)'" :stroke="n.bubble === 'warn' ? '#a87808' : '#a02018'" stroke-width="2" /></svg>
        </div>

        <div v-for="(p, i) in params" :key="'p' + i" class="node orange param" :style="box({ ...p, w: 76, h: 37 })">
          <i class="port in"></i>
          <svg width="38" height="35" viewBox="0 0 36 36" preserveAspectRatio="none" v-html="g[p.icon]"></svg>
          <i class="port out"></i>
          <svg class="bubble" width="28" height="28"><path d="M5 1H23Q27 1 27 5V18Q27 21 23 21H20L16 26L12 21H5Q1 21 1 18V5Q1 1 5 1Z" fill="url(#gWarn)" stroke="#a87808" stroke-width="2" /></svg>
        </div>

        <div v-for="s in sliders" :key="s.id" class="slider" :style="at(s.x, s.y)">
          <label :for="s.id">Number Slider</label>
          <div class="rail">
            <svg width="152" height="18"><path :d="ticks(s)" /></svg>
            <input :id="s.id" v-model.number="s.value" type="range" :min="s.min" :max="s.max" :step="s.step" :class="{ whole: s.whole }" />
            <output :style="valuePos(s)">{{ s.value }}</output>
          </div>
          <i class="port out"></i>
        </div>

        <div class="switch" :style="box({ x: 2370, y: 1167, w: 155, h: 33 })">
          <span>Button</span><button class="push" aria-label="Button"></button><i class="port out"></i>
        </div>
        <div class="switch" :style="box({ x: 2343, y: 1222, w: 219, h: 33 })">
          <span>Boolean Toggle</span><button class="value" @click="toggle = !toggle">{{ toggle ? 'True' : 'False' }}</button><i class="port out"></i>
        </div>

        <div class="stub"></div>
        <svg class="compass" width="80" height="76" viewBox="0 0 80 76">
          <path d="M1 14L13 11L17 17L10 23Z" fill="#000" />
          <path d="M14 25Q22 6 38 1" stroke="#000" stroke-width="5" fill="none" />
          <circle cx="45" cy="33" r="30" fill="url(#gDial)" stroke="#333" />
          <circle cx="45" cy="33" r="28" fill="none" stroke="#fff" stroke-width="2" />
          <path d="M52 5L60 10L53 15ZM64 43L73 40L71 48ZM32 58L38 52L40 61ZM18 27L20 18L27 23Z" fill="#fff" />
        </svg>
      </section>
      <div class="sill"></div>
    </main>

    <aside class="edge right">
      <div class="caps"></div><div class="bar"></div>
      <div class="scroll"><i></i></div>
      <div class="spin"><button aria-label="Up">▲</button><button aria-label="Down">▼</button></div>
      <div class="gear"><svg width="22" height="22"><circle cx="11" cy="11" r="8" stroke="#888" stroke-width="3" stroke-dasharray="4 2" fill="none" /><circle cx="11" cy="11" r="3" stroke="#888" stroke-width="2" fill="none" /></svg></div>
      <div class="blank"></div>
      <div class="gear soft"><svg width="22" height="22"><circle cx="11" cy="11" r="8" stroke="#b4c0dc" stroke-width="3" stroke-dasharray="4 2" fill="none" /><circle cx="11" cy="11" r="3" stroke="#b4c0dc" stroke-width="2" fill="none" /></svg></div>
      <div class="sheets"><i class="s3"></i><b></b><i class="s5"></i><b></b><i class="s2"></i><b></b><b></b></div>
    </aside>
  </div>
</template>

<style>
body { overflow: hidden; }
</style>

<style scoped>
* { box-sizing: border-box; }
button { font: inherit; color: inherit; border: 0; background: none; padding: 0; }
.defs { position: absolute; width: 0; height: 0; }
.desktop { display: flex; height: 100vh; background: #b8b8b8; font: 17px/24px 'Open Sans', 'Noto Sans', sans-serif; color: #111; }
.edge.left { width: 6px; background: linear-gradient(90deg, #c8cad2, #aeb0b6); padding-top: 10px; }
.edge.left .mark { display: block; height: 18px; background: #111; width: 5px; }
.window { flex: 1; min-width: 0; display: flex; flex-direction: column; margin-top: 2px; background: #f0f0f0; border: solid #9c9c9c; border-width: 0 4px 0 3px; border-radius: 10px 10px 0 0; }
.title { height: 43px; display: flex; align-items: center; padding: 0 25px 2px 10px; background: #faf2ea; border-radius: 10px 10px 0 0; }
.controls { margin-left: auto; display: flex; gap: 54px; }
.controls button { width: 16px; height: 16px; display: flex; }
.controls svg { fill: none; stroke: #111; stroke-width: 2; }
.menu { height: 41px; display: flex; align-items: center; gap: 24px; padding: 0 12px 0 15px; background: linear-gradient(90deg, #f0f0f0, #fdfdfd 60%); }
.menu .doc { margin-left: auto; }
.tabs { height: 33px; display: flex; font-size: 15px; color: #666; }
.tabs button { padding: 0 14px 0 13px; }
.tabs .active { position: relative; width: 77px; height: 34px; padding: 0 0 4px; color: #000; background: linear-gradient(#fff 40%, #dadada); border: 1px solid #999; border-bottom: 0; border-radius: 9px 9px 0 0; }
.ribbon { height: 133px; display: flex; align-items: flex-start; gap: 7px; padding: 4px 3px 0; background: linear-gradient(#d8d8d8, #f0f0f0 90%); border-top: 1px solid #999; border-bottom: 2px solid #777; border-top-right-radius: 10px; }
.panel { border-radius: 5px; background: linear-gradient(#d6d6d6, #ececec); box-shadow: inset 0 0 0 1px #999; overflow: hidden; }
.groups { display: flex; height: 87px; padding: 4px 0 0 5px; }
.group + .group { margin-left: 15px; position: relative; }
.group + .group::before { content: ''; position: absolute; left: -11px; top: 2px; bottom: 2px; width: 1px; background: #bbb; }
.row { display: flex; height: 42px; }
.cell { width: 42px; }
.cell svg { display: block; }
.caption { height: 21px; display: flex; align-items: center; padding: 0 4px 2px 0; background: linear-gradient(#2c2c2c, #181818); color: #fff; font-size: 14px; }
.caption span { flex: 1; text-align: center; }
.toolbar { height: 43px; display: flex; align-items: center; padding: 0 4px 1px 2px; background: linear-gradient(#fff, #f0f0f0); }
.tool { width: 36px; height: 36px; margin-right: 6px; display: flex; align-items: center; justify-content: center; flex: none; }
.sep { width: 1px; height: 34px; background: #bbb; margin: 0 4px 0 2px; }
.zoom { position: relative; width: 202px; height: 33px; margin-right: 4px; }
.zoom select { width: 100%; height: 100%; appearance: none; border: 1px solid #888; border-radius: 1px; background: #fff; padding: 0 3px; font: inherit; font-size: 17px; color: #111; }
.zoom svg { position: absolute; right: 8px; top: 13px; pointer-events: none; }
.caret { border: 4px solid transparent; border-top: 5px solid #000; border-bottom: 0; margin: 0 6px 0 2px; }
.caret.end { margin: 0; }
.fill { flex: 1; }
.mode { width: 40px; height: 40px; margin: 0 1px 0 0; }
.mode.on { outline: 1px solid #0078d7; outline-offset: -1px; }
.sep.wide { margin: 0 6px 0 8px; }
.sep.tight { margin: 0 1px 0 3px; }

.canvas { flex: 1; min-height: 0; position: relative; overflow: hidden; margin-right: 1px; background: #d4d0c8; font-size: 15px; line-height: 20px; }
.offpage { position: absolute; inset: 0 0 auto; height: 183px; border-bottom: 1px solid #000; background: linear-gradient(transparent 76%, rgba(70, 70, 68, .28) 88%, rgba(70, 70, 68, .56)), repeating-linear-gradient(135deg, #cbc7bf 0 1px, #d3cfc7 2px 3px); }
.grid { position: absolute; inset: 0; background-image: linear-gradient(90deg, rgba(0, 0, 0, .15) 1px, transparent 1px), linear-gradient(rgba(0, 0, 0, .13) 1px, transparent 1px); background-size: 225px 75px; background-position: 127px 32px; }
.wires { position: absolute; inset: 0; }
.wires .cold { fill: none; stroke: #3c3c38; stroke-opacity: .83; stroke-width: 5; }
.wires .hot { fill: none; stroke: #ff5a2c; stroke-opacity: .88; stroke-width: 5; }
.tag { position: absolute; height: 27px; line-height: 23px; text-align: center; white-space: nowrap; border: 1px solid #222; background: linear-gradient(#fff, #e0e0e0); }
.tag svg { position: absolute; left: 50%; top: 25px; margin-left: -10px; }

.node, .slider, .switch { position: absolute; border: 1px solid #333; border-radius: 5px; box-shadow: 0 0 0 1px rgba(0, 0, 0, .25), inset 0 0 0 1px rgba(255, 255, 255, .4); white-space: nowrap; }
.node { display: flex; align-items: center; }
.orange { border-color: #5a1000; background: linear-gradient(#fff0dc, rgba(255, 205, 145, .8)) 0 0 / 100% 12px no-repeat, linear-gradient(#ffa936, #ff8c14); }
.red { border-color: #4a0000; background: linear-gradient(#fbd0d0, #ec7474) 0 0 / 100% 12px no-repeat, linear-gradient(#e21a1a, #c80000); }
.grey { background: linear-gradient(#fff, #e8e8e8) 0 0 / 100% 12px no-repeat, linear-gradient(#e8e8e8, #c6c6c6); }
.slate, .switch { background: linear-gradient(#f0f0f4, #c6c5d0) 0 0 / 100% 12px no-repeat, linear-gradient(#a6a4b4, #8f8d9c); }
.ins, .outs { height: 100%; padding: 2px 0; display: flex; flex-direction: column; }
.ins span, .outs span { flex: 1; display: flex; align-items: center; position: relative; padding-bottom: 2px; }
.ins span { justify-content: flex-end; }
.ins { flex: none; }
.outs { flex: 1; }
.glyph { flex: none; margin: 0 10px; overflow: visible; }
.port { position: absolute; top: 50%; width: 8px; height: 16px; margin-top: -8px; background: #fff; border: 3px solid #000; }
.port.in { left: -9px; border-right: 0; border-radius: 8px 0 0 8px; }
.port.out { right: -9px; border-left: 0; border-radius: 0 8px 8px 0; }
.foot { position: absolute; top: 100%; left: 8px; right: 8px; padding-bottom: 1px; line-height: 21px; text-align: center; background: #303030; color: #f0f0f0; border-radius: 0 0 5px 5px; }
.orange .foot { background: #4d0800; color: #ffc4b0; }
.bubble { position: absolute; right: -3px; top: -25px; }
.param { justify-content: center; }
.exceptions { position: absolute; width: 143px; height: 44px; display: flex; align-items: center; padding: 0 0 2px 12px; }
.exceptions .jag { position: absolute; inset: 0; }
.exceptions span { position: relative; flex: 1; }
.exceptions .port.in { left: -7px; }
.exceptions .glasses { position: relative; margin-right: 11px; }
.exceptions .foot { left: 9px; right: 16px; background: #222; }

.slider { width: 305px; height: 31px; display: flex; background: linear-gradient(#fff, #e6e6e6 30%, #cacaca); }
.slider label { width: 124px; line-height: 27px; text-align: center; border-right: 1px solid #333; border-radius: 4px 0 0 4px; background: linear-gradient(#f0f0f4, #c6c5d0) 0 0 / 100% 9px no-repeat, linear-gradient(#a6a4b4, #8f8d9c); }
.rail { position: relative; flex: 1; }
.rail svg { position: absolute; left: 14px; top: 6px; fill: none; stroke: #a4a4a4; }
.rail input { position: absolute; left: 7px; top: 4px; width: 164px; height: 21px; margin: 0; appearance: none; background: none; }
.rail input::-webkit-slider-thumb { appearance: none; width: 14px; height: 14px; border: 3px solid #000; border-radius: 50%; background: #fff; }
.rail input.whole { left: 9px; width: 160px; }
.rail input.whole::-webkit-slider-thumb { width: 10px; height: 10px; border-width: 2px; border-radius: 0; transform: rotate(45deg); }
.rail output { position: absolute; top: 3px; }

.switch { display: flex; align-items: center; justify-content: space-between; padding: 0 2px 0 15px; }
.switch button { width: 70px; height: 27px; border: 2px solid #111; border-radius: 3px; }
.switch .push { background: linear-gradient(#c8c8c8, #888 48%, #505050 50%, #484848); box-shadow: inset 0 0 0 1px #ddd; }
.switch .value { background: linear-gradient(#707070, #404040 60%); color: #d4d4d4; font: 20px/20px 'Liberation Mono', monospace; box-shadow: inset 0 0 0 1px #777; }
.stub { position: absolute; left: 0; bottom: 0; width: 10px; height: 42px; border: 1px solid #000; border-left: 0; background: linear-gradient(#d8d8d8, #a0a0a0 36%, #808080 38%); }
.compass { position: absolute; right: 9px; bottom: 1px; }
.sill { height: 7px; background: #f0f0f0; border-top: 2px solid #fff; }

.edge.right { width: 27px; background: linear-gradient(90deg, #b4b6ba, #d8dae0 70%, #dcdee5); }
.caps { height: 34px; background: #e6e6e6; }
.bar { height: 33px; background: #fafafa; border-bottom: 5px solid #dfe1ea; }
.scroll { height: 94px; padding: 36px 0 0 10px; background: #ebebeb; border-bottom: 1px solid #a8b8d0; }
.scroll i { display: block; width: 11px; height: 26px; background: #808080; }
.spin { height: 31px; padding: 1px 0 0 4px; display: flex; flex-direction: column; background: #e8e8ea; }
.spin button { width: 23px; height: 13px; border: 1px solid #999; font-size: 9px; line-height: 9px; color: #000; }
.gear { height: 34px; padding: 7px 0 0 5px; border-bottom: 1px solid #a8b8d0; }
.blank { height: 128px; border-bottom: 2px solid #c0c8dc; }
.gear.soft { height: 48px; padding-top: 22px; }
.sheets { padding-top: 98px; }
.sheets i { display: block; width: 17px; background: repeating-linear-gradient(#dcdcdf 0 30px, #c0c2c8 31px); }
.sheets b { display: block; width: 16px; height: 28px; margin-bottom: 36px; background: #dedede; border: 1px solid #a4a4a4; border-left: 0; border-right: 2px solid #a4a4a4; border-radius: 0 5px 5px 0; }
.sheets .s3 { height: 94px; }
.sheets b + .s5 { height: 154px; margin: 70px 0 33px; }
.sheets .s2 { height: 92px; }
</style>
